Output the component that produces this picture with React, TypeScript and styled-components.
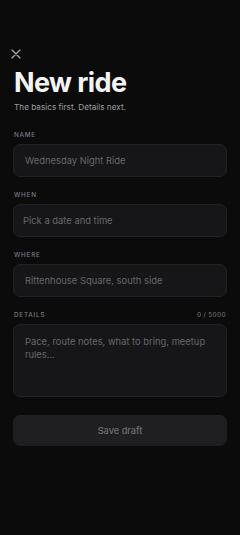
import React, { useState } from 'react';
import styled, { createGlobalStyle } from 'styled-components';

const GlobalStyle = createGlobalStyle`
    html, body {
        margin: 0;
        padding: 0;
        background: #0b0b0c;
    }
    body {
        font-family: Inter, "Noto Sans", "Liberation Sans", sans-serif;
        -webkit-font-smoothing: antialiased;
    }
    * {
        box-sizing: border-box;
    }
`;

const Screen = styled.div`
    min-height: 535px;
    background: #0b0b0c;
    color: #f2f2f3;
    padding: 48px 13px 0;
    display: flex;
    flex-direction: column;
`;

const CloseButton = styled.button`
    width: 12px;
    height: 12px;
    padding: 0;
    margin-left: -3px;
    border: none;
    background: none;
    color: #b4b4b8;
    display: flex;
    align-items: center;
    justify-content: center;
    cursor: pointer;
`;

const Title = styled.h1`
    margin: 7px 0 0 1px;
    font-size: 27px;
    line-height: 32px;
    font-weight: 700;
    letter-spacing: -0.6px;
    color: #f4f4f5;
`;

const Subtitle = styled.p`
    margin: 2px 0 0 1px;
    font-size: 8.2px;
    line-height: 12px;
    color: #9c9ca1;
`;

const Form = styled.form`
    margin-top: 17px;
    display: flex;
    flex-direction: column;
    gap: 13px;
`;

const Field = styled.div`
    display: flex;
    flex-direction: column;
    gap: 4px;
`;

const LabelRow = styled.div`
    display: flex;
    justify-content: space-between;
    align-items: center;
    padding: 0 1px;
`;

const Label = styled.label`
    font-size: 6.3px;
    line-height: 10px;
    font-weight: 500;
    letter-spacing: 0.8px;
    text-transform: uppercase;
    color: #7a7a80;
`;

const Counter = styled.span`
    font-size: 6.3px;
    line-height: 10px;
    font-weight: 500;
    letter-spacing: 0.4px;
    color: #6a6a70;
`;

const Input = styled.input<{ $inset?: number }>`
    width: 100%;
    height: 33px;
    padding: 0 ${(p) => p.$inset ?? 11}px;
    border: 1px solid #222225;
    border-radius: 7px;
    background: #161618;
    color: #e4e4e7;
    font-family: inherit;
    font-size: 9.4px;
    outline: none;

    &::placeholder {
        color: #66666b;
    }
`;

const TextArea = styled.textarea`
    width: 100%;
    height: 73px;
    padding: 11px 11px;
    border: 1px solid #222225;
    border-radius: 7px;
    background: #161618;
    color: #e4e4e7;
    font-family: inherit;
    font-size: 9.4px;
    line-height: 12.5px;
    resize: none;
    outline: none;

    &::placeholder {
        color: #66666b;
    }
`;

const SaveButton = styled.button`
    margin-top: 5px;
    height: 31px;
    border: none;
    border-radius: 7px;
    background: #1f1f22;
    color: #6d6d72;
    font-family: inherit;
    font-size: 9.2px;
    font-weight: 500;
    cursor: not-allowed;
`;

const CloseIcon = () => (
    <svg width="10" height="10" viewBox="0 0 10 10" fill="none">
        <path d="M1 1L9 9M9 1L1 9" stroke="currentColor" strokeWidth="1.1" strokeLinecap="round" />
    </svg>
);

const MAX_DETAILS = 5000;

const App = () => {
    const [details, setDetails] = useState('');

    return (
        <>
            <GlobalStyle />
            <Screen>
                <CloseButton aria-label="Close">
                    <CloseIcon />
                </CloseButton>
                <Title>New ride</Title>
                <Subtitle>The basics first. Details next.</Subtitle>
                <Form onSubmit={(e) => e.preventDefault()}>
                    <Field>
                        <LabelRow>
                            <Label htmlFor="name">Name</Label>
                        </LabelRow>
                        <Input id="name" placeholder="Wednesday Night Ride" />
                    </Field>
                    <Field>
                        <LabelRow>
                            <Label htmlFor="when">When</Label>
                        </LabelRow>
                        <Input id="when" $inset={9} placeholder="Pick a date and time" />
                    </Field>
                    <Field>
                        <LabelRow>
                            <Label htmlFor="where">Where</Label>
                        </LabelRow>
                        <Input id="where" placeholder="Rittenhouse Square, south side" />
                    </Field>
                    <Field>
                        <LabelRow>
                            <Label htmlFor="details">Details</Label>
                            <Counter>{details.length} / {MAX_DETAILS}</Counter>
                        </LabelRow>
                        <TextArea
                            id="details"
                            maxLength={MAX_DETAILS}
                            value={details}
                            onChange={(e) => setDetails(e.target.value)}
                            placeholder="Pace, route notes, what to bring, meetup rules..."
                        />
                    </Field>
                    <SaveButton type="submit" disabled>Save draft</SaveButton>
                </Form>
            </Screen>
        </>
    );
};

export default App;
